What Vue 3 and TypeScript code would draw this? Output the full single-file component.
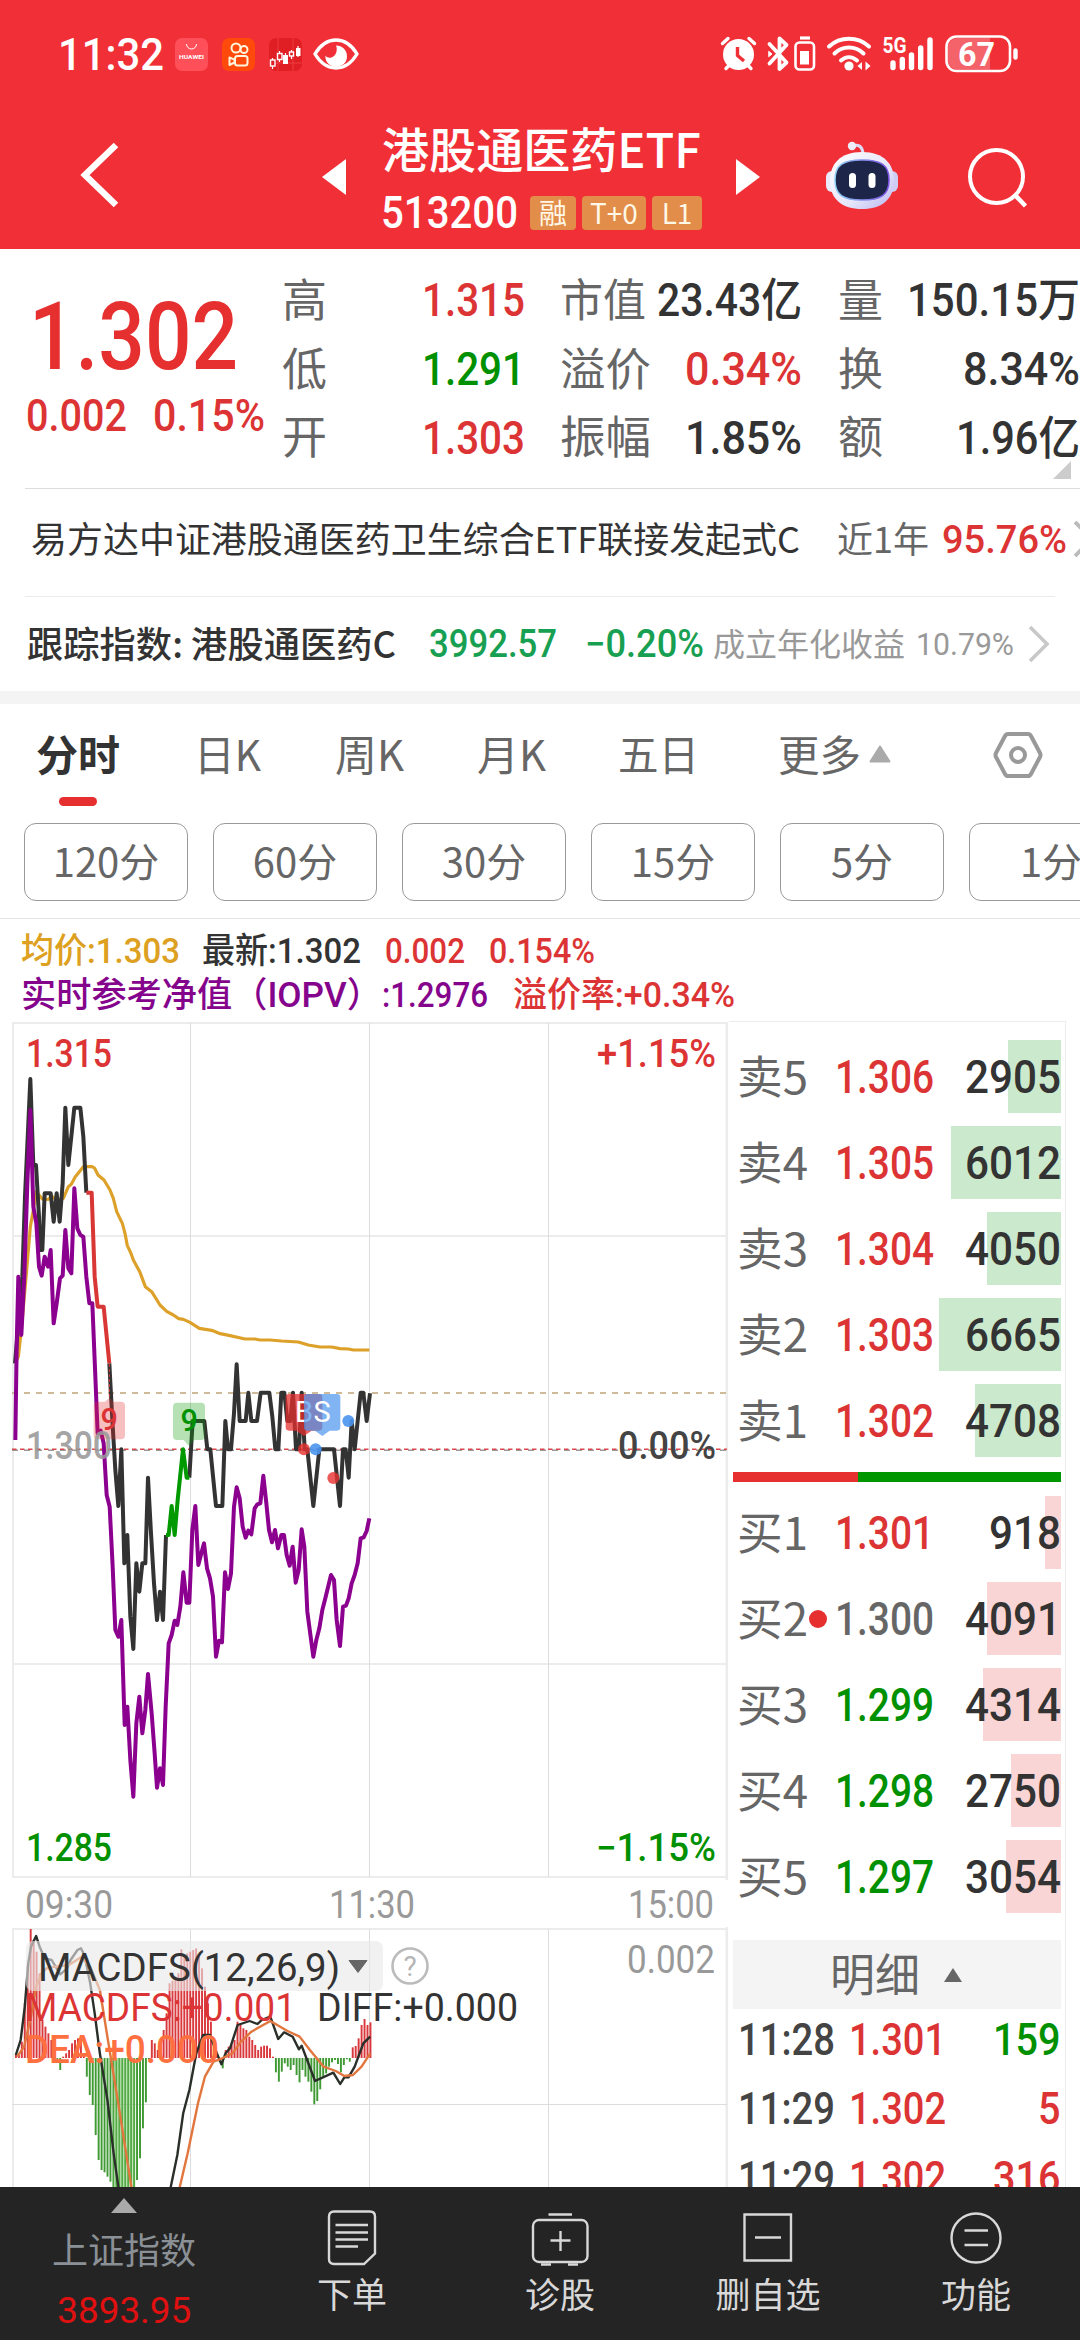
<script setup lang="ts">
import type { Directive } from 'vue'

type Tone = 'up' | 'down' | 'dark' | 'flat'

// Condenses a run of text horizontally so that it takes exactly the given width.
const vFit: Directive<HTMLElement, number> = {
  mounted(el, { value }) {
    const natural = el.getBoundingClientRect().width
    if (!natural) return
    el.style.transform = `scaleX(${value / natural})`
    el.style.marginRight = `${value - natural}px`
  },
}

interface Stat { label: string; value: string; tone: Tone; lw: number; w: number }
const stats: Stat[][] = [
  [
    { label: '高', value: '1.315', tone: 'up', lw: 45, w: 103 },
    { label: '低', value: '1.291', tone: 'down', lw: 45, w: 103 },
    { label: '开', value: '1.303', tone: 'up', lw: 45, w: 103 },
  ],
  [
    { label: '市值', value: '23.43亿', tone: 'dark', lw: 86, w: 145 },
    { label: '溢价', value: '0.34%', tone: 'up', lw: 91, w: 117 },
    { label: '振幅', value: '1.85%', tone: 'dark', lw: 91, w: 117 },
  ],
  [
    { label: '量', value: '150.15万', tone: 'dark', lw: 45, w: 173 },
    { label: '换', value: '8.34%', tone: 'dark', lw: 45, w: 117 },
    { label: '额', value: '1.96亿', tone: 'dark', lw: 45, w: 124 },
  ],
]

const tabs = [
  { text: '日K', w: 67 },
  { text: '周K', w: 69 },
  { text: '月K', w: 69 },
  { text: '五日', w: 81 },
  { text: '更多', w: 83 },
]
const periods = ['120分', '60分', '30分', '15分', '5分', '1分']

interface Level { side: string; price: string; qty: string; tone: Tone; bar: number; mine?: boolean }
const sells: Level[] = [
  { side: '卖5', price: '1.306', qty: '2905', tone: 'up', bar: 53 },
  { side: '卖4', price: '1.305', qty: '6012', tone: 'up', bar: 110 },
  { side: '卖3', price: '1.304', qty: '4050', tone: 'up', bar: 74 },
  { side: '卖2', price: '1.303', qty: '6665', tone: 'up', bar: 122 },
  { side: '卖1', price: '1.302', qty: '4708', tone: 'up', bar: 86 },
]
const buys: Level[] = [
  { side: '买1', price: '1.301', qty: '918', tone: 'up', bar: 16 },
  { side: '买2', price: '1.300', qty: '4091', tone: 'flat', bar: 74, mine: true },
  { side: '买3', price: '1.299', qty: '4314', tone: 'down', bar: 78 },
  { side: '买4', price: '1.298', qty: '2750', tone: 'down', bar: 50 },
  { side: '买5', price: '1.297', qty: '3054', tone: 'down', bar: 55 },
]
const ticks = [
  { time: '11:28', price: '1.301', qty: '159', tone: 'down' },
  { time: '11:29', price: '1.302', qty: '5', tone: 'up' },
  { time: '11:29', price: '1.302', qty: '316', tone: 'up' },
]

// Series are stored on a grid of one third of a pixel.
const avgLine =
  '46,1060 55,1040 64,960 73,860 80,780 91,650 100,600 109,545 127,567 145,568 155,558 170,570 190,565 205,530 214,523 225,502 250,470 277,470 284,475 294,495 312,510 330,540 340,565 350,605 367,640 375,670 382,707 392,728 400,750 420,787 436,830 455,845 480,885 500,904 520,915 536,926 550,928 570,937 598,955 635,961 657,970 690,977 735,987 765,987 780,990 810,990 845,993 895,996 925,1005 960,1011 995,1011 1020,1016 1045,1017 1060,1020 1108,1020'
const priceA =
  '45,1060 55,940 67,800 75,560 91,207 100,465 108,465 117,620 120,720 127,720 134,550 152,550 161,635 170,550 179,635 188,520 196,293 205,465 223,293 241,293 250,380 259,548'
const priceRed = '259,548 275,548 284,800 293,890 311,890 328,1060'
const priceB =
  '328,1060 337,1230 346,1380 355,1488 364,1318 373,1660 382,1575 391,1820 400,1917 409,1660 418,1745 427,1660 436,1660 444,1403 453,1570 462,1720 471,1830 480,1745 489,1830 498,1575'
const priceGreen = '498,1575 506,1575 515,1488 524,1575 533,1470 549,1318 560,1403 568,1403'
const priceC =
  '568,1403 578,1233 613,1233 622,1318 631,1318 648,1488 667,1488 676,1233 684,1318 693,1318 702,1210 710,1063 719,1233 737,1233 745,1148 754,1233 771,1233 782,1148 808,1148 817,1220 826,1318 835,1318 844,1148 853,1148 862,1233 871,1233 879,1148 888,1318 897,1318 905,1148 914,1318 922,1318 940,1488 958,1318 1002,1318 1020,1488 1029,1318 1037,1318 1046,1403 1055,1233 1064,1318 1082,1148 1090,1148 1100,1233 1110,1150'
const iopvLine =
  '46,1290 50,1010 55,800 64,975 73,800 82,520 91,300 100,590 109,640 117,770 125,797 134,740 144,770 152,720 161,940 170,880 180,805 188,797 196,660 205,775 214,790 223,535 232,655 241,675 250,680 259,800 268,880 277,880 284,1050 293,1270 302,1262 311,1300 320,1455 329,1490 338,1670 346,1860 355,1880 364,1830 374,2145 382,2090 391,2250 400,2360 409,2140 418,2060 427,2170 436,2100 444,1992 455,2110 464,2230 471,2333 480,2275 489,2325 497,2090 506,1900 515,1875 524,1832 532,1845 541,1790 550,1687 560,1778 568,1778 577,1560 586,1488 595,1665 604,1630 612,1600 621,1675 630,1705 639,1760 648,1940 657,1892 666,1897 675,1687 684,1737 693,1690 702,1490 710,1432 719,1465 728,1550 737,1583 745,1562 754,1573 764,1495 772,1483 781,1480 790,1397 799,1480 807,1560 816,1597 825,1560 834,1615 844,1575 852,1575 860,1635 869,1667 878,1610 887,1718 896,1680 905,1558 913,1610 922,1805 940,1940 949,1890 958,1855 967,1800 976,1765 993,1695 1002,1710 1010,1830 1020,1908 1029,1790 1038,1787 1046,1765 1055,1720 1064,1695 1073,1660 1082,1585 1091,1582 1100,1563 1108,1525'

// MACD histogram, one value a minute: end of the bar below the pane's top; the zero line is at 654.
const ZERO = 654
const macd = [
  645, 640, 605, 490, 375, 267, 300, 335, 400, 540, 560, 580, 600, 650, 660, 690, 650, 640, 630, 610, 600, 595, 600, 640,
  710, 765, 795, 885, 960, 990, 997, 1010, 1025, 1045, 1060, 1080, 1100, 1100, 1080, 1060, 1045, 1020, 955, 865, 787, 658,
  600, 610, 630, 620, 570, 520, 430, 422, 410, 400, 328, 345, 340, 335, 330, 325, 350, 385, 440, 490, 545, 600, 640, 665,
  685, 630, 620, 615, 600, 545, 550, 565, 570, 590, 600, 615, 630, 620, 617, 617, 625, 650, 697, 725, 695, 670, 680, 690,
  675, 705, 727, 690, 710, 725, 755, 793, 783, 748, 710, 700, 680, 667, 660, 672, 697, 675, 658, 665, 622, 618, 595, 555,
  537, 555, 547,
]
const bars = macd.map((v, i) => ({
  x: 46 + i * 8.58 - 2.6,
  y: Math.min(v, ZERO),
  h: Math.abs(v - ZERO),
  red: v < ZERO,
}))
const diffA =
  '46,645 60,600 72,500 82,370 90,320 105,288 115,320 130,355 150,360 175,403 195,385 205,360 225,330 235,325 245,345 262,430 275,520 290,640 312,780 330,940 345,1050'
const diffB =
  '494,1050 515,945 532,820 550,750 570,640 590,585 610,585 630,640 643,673 655,640 668,625 690,555 725,543 748,552 760,540 785,530 808,597 825,577 850,590 868,628 876,617 915,723 968,698 988,732 1000,712 1012,712 1030,680 1055,610 1075,590'
const deaA = '50,650 70,620 90,530 105,440 120,400 135,385 160,380 200,375 235,352 262,380 290,450 315,610 345,800 383,1050'
const deaB =
  '520,1050 545,940 575,790 595,710 620,665 645,655 675,640 700,605 730,575 785,543 835,573 870,590 900,630 940,680 975,693 1000,708 1025,705 1050,680 1075,640'
</script>

<template>
  <div class="app">
    <header class="top">
      <div class="status">
        <span v-fit="106" class="clock">11:32</span>
        <svg class="app-huawei" width="33" height="33" viewBox="0 0 33 33">
          <rect width="33" height="33" rx="7" fill="#ff4f58" />
          <path d="M11.500 6a5 5 0 0 0 10 0" fill="none" stroke="#fff" stroke-width="1" />
          <text x="16.500" y="21" font-size="6" font-weight="700" text-anchor="middle" fill="#fff" textLength="25" lengthAdjust="spacingAndGlyphs">HUAWEI</text>
        </svg>
        <svg class="app-icon" width="33" height="33" viewBox="0 0 33 33">
          <rect width="33" height="33" rx="7" fill="#ff4a0c" />
          <g fill="none" stroke="#fff4dc" stroke-width="2">
            <circle cx="14" cy="10" r="4.500" /><circle cx="22" cy="11.500" r="3.500" />
            <rect x="13" y="18" width="12.500" height="9.500" rx="2.500" />
            <path d="M7.500 19.500v7.500l5-2.500v-2.800z" stroke-linejoin="round" />
          </g>
        </svg>
        <svg class="app-icon" width="33" height="33" viewBox="0 0 33 33">
          <rect width="33" height="33" rx="7" fill="#e01f24" />
          <path d="M0 25h33M9 0v33M24 0v33" stroke="#f0484a" stroke-width=".8" />
          <path d="M3.500 20v11M10.500 13v11M16.500 15v11M22.500 12v9M29 8v11" stroke="#fff" stroke-width="1.200" />
          <g fill="#e01f24" stroke="#fff" stroke-width="1.400">
            <rect x="1.500" y="22" width="4.500" height="6" /><rect x="8.500" y="15.500" width="4.500" height="6" />
            <rect x="20.500" y="14" width="4" height="4" />
          </g>
          <path d="M14 17h5v9h-5zM27 10h4.500v8H27z" fill="#fff" />
        </svg>
        <svg class="eye" width="46" height="32" viewBox="0 0 46 32">
          <path d="M2 16C8 6 15 2 23 2s15 4 21 14c-6 10-13 14-21 14S8 26 2 16z" fill="none" stroke="#fff" stroke-width="3.400" />
          <path d="M23 7.500a10.800 10.800 0 1 1-10.600 10.200c1.200 1.600 3.600 2.400 6 1.800 4.600-1.200 6.600-7.500 4.600-12z" fill="#fff" />
        </svg>
        <span class="grow"></span>
        <svg width="300" height="38" viewBox="720 35 300 38">
          <g stroke="#fff" fill="none" stroke-linecap="round">
            <path d="M722.500 43.500l5.500-5M754.500 43.500l-5.500-5M726 68.500l4-4M751 68.500l-4-4" stroke-width="3.400" />
            <circle cx="738.500" cy="54.500" r="15.500" fill="#fff" stroke="none" />
            <path d="M737.500 47v8.500l6.500 5.500" stroke="#f12f37" stroke-width="3.400" stroke-linecap="butt" />
            <path d="M769.500 44l17 18.500-7 6.500V38.500l7 6.500-17 18.500" stroke-width="3.800" stroke-linejoin="round" />
            <path d="M769 51.500l3 2.500-3 2.500z" fill="#fff" stroke-width="1" />
            <rect x="795.500" y="42.500" width="18.500" height="27" rx="4" stroke-width="2.600" />
            <path d="M800 38h10" stroke-width="3.200" stroke-linecap="butt" />
            <rect x="800" y="51" width="9" height="13.500" fill="#fff" stroke="none" />
            <path d="M829 46.500c11-10.500 29-10.500 40 0M834.500 53.500c8-8 21-8 29 0M841 60.500c5-4.500 11-4.500 16 0" stroke-width="4" />
            <circle cx="849" cy="66" r="4.600" fill="#fff" stroke="none" />
            <path d="M857.500 66l4.500-4v8zM870.500 66l-5-4.500v9z" fill="#fff" stroke="none" />
            <path d="M893 63v4.500M902.300 59.500v8M911.500 55v12.500M920.700 48v19.500M930 40v27.500" stroke-width="5.400" />
            <rect x="946.500" y="36.500" width="63.500" height="34.500" rx="10" stroke-width="2.600" />
            <path d="M957 38h33v31.500h-33a9 9 0 0 1-9-9V47a9 9 0 0 1 9-9z" fill="#fff" fill-opacity=".25" stroke="none" />
            <path d="M1015.500 50.500v7" stroke-width="4.400" />
          </g>
          <text x="882.500" y="53" font-size="22" font-weight="700" fill="#fff" textLength="24" lengthAdjust="spacingAndGlyphs">5G</text>
          <text x="958" y="66" font-size="33" font-weight="700" fill="#fff" textLength="37" lengthAdjust="spacingAndGlyphs">67</text>
        </svg>
      </div>
      <div class="nav">
        <svg class="back" width="40" height="68" viewBox="0 0 40 68">
          <path d="M36 4L5 34l31 30" fill="none" stroke="#fff" stroke-width="6.500" />
        </svg>
        <svg class="prev" width="24" height="36" viewBox="0 0 24 36"><path d="M24 0v36L0 18z" fill="#fff" /></svg>
        <div class="name">
          <div class="title"><span v-fit="319" class="c">港股通医药ETF</span></div>
          <div class="code">
            <span v-fit="137" class="num">513200</span>
            <i class="tag t1">融</i><i class="tag t2">T+0</i><i class="tag t3">L1</i>
          </div>
        </div>
        <svg class="next" width="24" height="36" viewBox="0 0 24 36"><path d="M0 0v36l24-18z" fill="#fff" /></svg>
        <svg class="robot" width="72" height="68" viewBox="0 0 72 68">
          <defs>
            <linearGradient id="shell" x1="0" y1="0" x2="1" y2="1">
              <stop offset="0" stop-color="#fff" /><stop offset=".6" stop-color="#e6e6fb" /><stop offset="1" stop-color="#b9b6f0" />
            </linearGradient>
            <linearGradient id="rim" x1="0" y1="0" x2="1" y2="0">
              <stop offset="0" stop-color="#8fd0f5" /><stop offset="1" stop-color="#7b4fe0" />
            </linearGradient>
          </defs>
          <path d="M27 5c5-2 9 0 10 7" fill="none" stroke="#dcdcf6" stroke-width="3" />
          <circle cx="26" cy="5" r="4.200" fill="#eeeefb" />
          <rect x="0" y="30" width="12" height="21" rx="6" fill="#e9eafc" />
          <rect x="60" y="30" width="12" height="21" rx="6" fill="#cfcdf3" />
          <path d="M36 11c22 0 32 12 32 29 0 18-12 28-32 28S4 58 4 40c0-17 10-29 32-29z" fill="url(#shell)" />
          <path d="M36 19c19 0 27 5 27 20s-8 20-27 20S9 54 9 39s8-20 27-20z" fill="#1d2549" stroke="url(#rim)" stroke-width="1.500" />
          <rect x="23" y="32" width="7" height="15" rx="3.500" fill="#fff" /><rect x="42.500" y="32" width="7" height="15" rx="3.500" fill="#fff" />
        </svg>
        <svg class="search" width="62" height="62" viewBox="0 0 62 62">
          <circle cx="30.500" cy="30.500" r="26.500" fill="none" stroke="#fff" stroke-width="4" />
          <path d="M48 48l11.500 12" stroke="#fff" stroke-width="4.500" />
        </svg>
      </div>
    </header>

    <section class="quote">
      <div class="last">
        <div class="big up"><span v-fit="209">1.302</span></div>
        <div class="chg up"><span v-fit="101">0.002</span><span v-fit="112" class="pct">0.15%</span></div>
      </div>
      <div v-for="(col, i) in stats" :key="i" class="col" :class="'col' + i">
        <div v-for="s in col" :key="s.label" class="stat">
          <span v-fit="s.lw" class="c lab">{{ s.label }}</span>
          <span class="val"><span v-fit="s.w" :class="s.tone">{{ s.value }}</span></span>
        </div>
      </div>
      <i class="corner"></i>
    </section>

    <section class="line fund">
      <span v-fit="769" class="c dark">易方达中证港股通医药卫生综合ETF联接发起式C</span>
      <span v-fit="92" class="c near">近1年</span>
      <span v-fit="125" class="num fund-pct up">95.76%</span>
      <svg class="more" width="8" height="36" viewBox="0 0 8 36"><path d="M1 1l17 17L1 35" fill="none" stroke="#bbb" stroke-width="4" /></svg>
    </section>
    <section class="line index">
      <span v-fit="369" class="c dark med">跟踪指数: 港股通医药C</span>
      <span v-fit="128" class="num idx g1">3992.57</span>
      <span v-fit="119" class="num idx g2">−0.20%</span>
      <span v-fit="192" class="c ann">成立年化收益</span>
      <span v-fit="98" class="num annv">10.79%</span>
      <svg class="chev" width="22" height="38" viewBox="0 0 22 38"><path d="M2 2l17 17L2 36" fill="none" stroke="#c8c8c8" stroke-width="3.600" /></svg>
    </section>

    <nav class="tabs">
      <span class="tab on"><span v-fit="84" class="c">分时</span></span>
      <span v-for="(t, i) in tabs" :key="t.text" class="tab" :class="'tab' + i"><span v-fit="t.w" class="c">{{ t.text }}</span></span>
      <svg class="tri" width="22" height="18" viewBox="0 0 22 18"><path d="M11 1.500L20.500 16.500H1.500z" fill="#aaa" stroke="#aaa" stroke-width="2" stroke-linejoin="round" /></svg>
      <svg class="gear" width="50" height="48" viewBox="0 0 50 48">
        <path d="M15 3h20q2 0 3 2l9 17q1 2 0 4l-9 17q-1 2-3 2H15q-2 0-3-2L3 26q-1-2 0-4l9-17q1-2 3-2z" fill="none" stroke="#999" stroke-width="4" />
        <circle cx="25" cy="24" r="7" fill="none" stroke="#999" stroke-width="4" />
      </svg>
    </nav>
    <div class="pills"><span v-for="p in periods" :key="p" class="pill"><span class="c">{{ p }}</span></span></div>

    <div class="legend">
      <div class="lg">
        <span v-fit="159" class="gold">均价:1.303</span><span v-fit="159" class="dark l2">最新:1.302</span>
        <span v-fit="80" class="up l3">0.002</span><span v-fit="106" class="up l4">0.154%</span>
      </div>
      <div class="lg">
        <span v-fit="361" class="purple">实时参考净值（IOPV）</span><span v-fit="106" class="purple">:1.2976</span><span v-fit="222" class="up l5">溢价率:+0.34%</span>
      </div>
    </div>

    <main class="body">
      <div class="charts">
        <svg width="729" height="862" viewBox="0 1018 729 862">
          <g fill="none" stroke="#ececec" stroke-width="2">
            <path d="M13 1022.500V1877M12 1023H728M12 1236H728M12 1664H728M12 1877H728" />
            <path d="M726.800 1022V1880" stroke-width="2.600" />
          </g>
          <path d="M190.500 1023V1877M369.500 1023V1877M548.500 1023V1877" stroke="#ddd" stroke-width="1" />
          <path d="M12 1393H727" stroke="#c0a575" stroke-width="1.600" stroke-dasharray="6 6" />
          <path d="M12 1450.300H727" stroke="#999" stroke-width="1.400" stroke-dasharray="6 6" />
          <path d="M12 1449.300H727" stroke="#d94848" stroke-width="1.600" stroke-dasharray="4.500 3.500" />
          <g font-size="38" font-weight="500" text-anchor="start">
            <text x="26" y="1067" class="f-up" textLength="86" lengthAdjust="spacingAndGlyphs">1.315</text>
            <text x="26" y="1861" class="f-down" textLength="86" lengthAdjust="spacingAndGlyphs">1.285</text>
            <text x="597" y="1067" class="f-up" textLength="119" lengthAdjust="spacingAndGlyphs">+1.15%</text>
            <text x="618" y="1459" fill="#444" textLength="98" lengthAdjust="spacingAndGlyphs">0.00%</text>
            <text x="596" y="1861" class="f-down" textLength="120" lengthAdjust="spacingAndGlyphs">−1.15%</text>
          </g>
          <g transform="translate(0 1010) scale(.33333)" fill="none" stroke-width="12" stroke-linejoin="round">
            <polyline :points="avgLine" stroke="#dda12a" stroke-width="9.500" />
            <g stroke="#333">
              <polyline :points="priceA" /><polyline :points="priceB" /><polyline :points="priceC" />
            </g>
            <polyline :points="priceRed" stroke="#d93636" />
            <polyline :points="priceGreen" stroke="#009900" />
            <polyline :points="iopvLine" stroke="#8b008f" />
            <path d="M328 1062V1165" stroke="#d93636" stroke-width="3" stroke-dasharray="9 6" />
            <g stroke="none">
              <path d="M293 1175h22l13-12 13 12h22q12 0 12 12v89q0 12-12 12h-70q-12 0-12-12v-89q0-12 12-12z" fill="#e62f2f" fill-opacity=".3" />
              <path d="M531 1178h72q12 0 12 12v88q0 12-12 12h-20l-16 18-16-18h-20q-12 0-12-12v-88q0-12 12-12z" fill="#0a9a0a" fill-opacity=".3" />
              <path d="M867 1152h90q10 0 10 10v90q0 10-10 10h-22l-23 16-23-16h-22q-10 0-10-10v-90q0-10 10-10z" fill="#e62f2f" fill-opacity=".75" />
              <text x="912" y="1237" font-size="87" text-anchor="middle" fill="#fff">B</text>
              <path d="M922 1152h89q10 0 10 10v90q0 10-10 10h-22l-22 16-22-16h-23q-10 0-10-10v-90q0-10 10-10z" fill="#4a94ee" fill-opacity=".7" />
              <text x="966" y="1237" font-size="87" text-anchor="middle" fill="#fff">S</text>
              <text x="328" y="1260" font-size="92" font-weight="500" text-anchor="middle" class="f-up">9</text>
              <text x="568" y="1262" font-size="92" font-weight="500" text-anchor="middle" class="f-down">9</text>
              <circle cx="912" cy="1318" r="18" fill="#e62f2f" fill-opacity=".8" />
              <circle cx="947" cy="1318" r="18" fill="#4a94ee" fill-opacity=".9" />
              <circle cx="1045" cy="1233" r="18" fill="#4a94ee" fill-opacity=".9" />
              <circle cx="1000" cy="1404" r="18" fill="#e62f2f" fill-opacity=".8" />
            </g>
          </g>
          <text x="26" y="1459" font-size="38" font-weight="500" fill="#999" fill-opacity=".9" textLength="86" lengthAdjust="spacingAndGlyphs">1.300</text>
        </svg>
        <div class="times">
          <span v-fit="88">09:30</span><span v-fit="86" class="noon">11:30</span><span v-fit="86" class="close">15:00</span>
        </div>
        <svg width="729" height="260" viewBox="0 1927 729 260">
          <path d="M12 1929H728M13 1928V2190" stroke="#ececec" stroke-width="2" />
          <path d="M726.800 1927V2190" stroke="#ececec" stroke-width="2.600" />
          <path d="M12 2104.500H727M190.500 1929V2190M369.500 1929V2190M548.500 1929V2190" stroke="#ddd" stroke-width="1" />
          <g transform="translate(0 1840) scale(.34435 .33333)" fill="none" stroke-width="7" stroke-linejoin="round">
            <g stroke="none">
              <rect v-for="(b, i) in bars" :key="i" :x="b.x" :y="b.y" width="5.600" :height="b.h" :fill="b.red ? '#d9383c' : '#3f9a34'" />
              <path d="M329 654h64v400h-64z" fill="#7ccb66" fill-opacity=".35" />
            </g>
            <polyline :points="diffA" stroke="#2a2f2a" /><polyline :points="diffB" stroke="#2a2f2a" />
            <polyline :points="deaA" stroke="#e2763f" /><polyline :points="deaB" stroke="#e2763f" />
          </g>
          <rect x="26" y="1941" width="357" height="50" rx="7" fill="#e9e9e9" fill-opacity=".62" />
          <text x="38" y="1981" font-size="38" fill="#333" class="w" textLength="302" lengthAdjust="spacingAndGlyphs">MACDFS(12,26,9)</text>
          <path d="M349 1960.500h18l-9 12z" fill="#666" stroke="#666" stroke-linejoin="round" />
          <circle cx="410" cy="1966" r="17.500" fill="none" stroke="#bbb" stroke-width="2.600" />
          <text x="410" y="1976" font-size="28" text-anchor="middle" fill="#b5b5b5" class="w">?</text>
          <g font-size="38">
            <text x="25" y="2021" class="f-up" textLength="271" lengthAdjust="spacingAndGlyphs">MACDFS:+0.001</text>
            <text x="317" y="2021" fill="#333" textLength="201" lengthAdjust="spacingAndGlyphs">DIFF:+0.000</text>
            <text x="25" y="2063" fill="#ff7040" font-weight="500" textLength="194" lengthAdjust="spacingAndGlyphs">DEA:+0.000</text>
            <text x="627" y="1973" fill="#999" textLength="88" lengthAdjust="spacingAndGlyphs">0.002</text>
          </g>
        </svg>
      </div>

      <aside class="book">
        <div v-for="l in sells" :key="l.side" class="level sell">
          <i class="depth" :style="{ width: l.bar + 'px' }"></i>
          <span v-fit="71" class="c side">{{ l.side }}</span>
          <span v-fit="99" class="price" :class="l.tone">{{ l.price }}</span>
          <span class="qty"><span v-fit="96">{{ l.qty }}</span></span>
        </div>
        <div class="ratio"><i></i></div>
        <div v-for="l in buys" :key="l.side" class="level buy">
          <i class="depth" :style="{ width: l.bar + 'px' }"></i>
          <span v-fit="71" class="c side">{{ l.side }}</span>
          <i v-if="l.mine" class="dot"></i>
          <span v-fit="99" class="price" :class="l.tone">{{ l.price }}</span>
          <span class="qty"><span v-fit="l.qty.length * 24">{{ l.qty }}</span></span>
        </div>
        <div class="detail"><span class="c">明细</span><svg width="18" height="14" viewBox="0 0 18 14"><path d="M9 0l9 14H0z" fill="#666" /></svg></div>
        <div v-for="(t, i) in ticks" :key="i" class="tick">
          <span v-fit="97">{{ t.time }}</span>
          <span v-fit="97" class="tp up">{{ t.price }}</span>
          <span class="tq" :class="t.tone"><span v-fit="t.qty.length * 22.5">{{ t.qty }}</span></span>
        </div>
      </aside>
    </main>

    <footer class="dock">
      <div class="sse">
        <svg width="26" height="15" viewBox="0 0 26 15"><path d="M13 0l13 15H0z" fill="#aaa" /></svg>
        <span class="c sse-name">上证指数</span>
        <span v-fit="134" class="sse-val">3893.95</span>
      </div>
      <div class="item">
        <svg width="60" height="60" viewBox="0 0 60 60" class="ic">
          <path d="M12 4.500h36q5 0 5 5v37L42 57H12q-5 0-5-5V9.500q0-5 5-5z" /><path d="M13.500 18H46M13.500 25.500H46M13.500 32.500H46M13.500 39.500H36" />
        </svg>
        <span class="c">下单</span>
      </div>
      <div class="item">
        <svg width="60" height="60" viewBox="0 0 60 60" class="ic">
          <rect x="3" y="13" width="54.500" height="42" rx="6" /><path d="M18.500 7.500H42M11 57.500h10M38 57.500h10M20.500 33.500h20M30.500 24v20" />
        </svg>
        <span class="c">诊股</span>
      </div>
      <div class="item">
        <svg width="60" height="60" viewBox="0 0 60 60" class="ic"><path d="M6.500 7.500h46.500v46H6.500zM17 30.500h26" /></svg>
        <span class="c">删自选</span>
      </div>
      <div class="item">
        <svg width="60" height="60" viewBox="0 0 60 60" class="ic"><circle cx="30" cy="31" r="24.500" /><path d="M18.500 23.500H42M18.500 38H42" /></svg>
        <span class="c">功能</span>
      </div>
    </footer>
  </div>
</template>

<style>
body {
  margin: 0;
  background: #fff;
}
</style>

<style scoped>
.app {
  width: 1080px;
  height: 2340px;
  overflow: hidden;
  background: #fff;
  font-family: Roboto, 'Noto Sans CJK SC', sans-serif;
  color: #333;
  display: flex;
  flex-direction: column;
}
.app > * {
  flex: none;
}
span {
  white-space: nowrap;
}
svg {
  display: block;
  flex: none;
}
span,
i {
  flex: none;
  transform-origin: left center;
}
.c {
  font-family: 'Noto Sans CJK SC', sans-serif;
  padding-bottom: 0.11em;
  display: inline-block;
}
.up { color: #dc3434; }
.down { color: #009000; }
.dark { color: #333; }
.flat { color: #666; }
.gold { color: #dda020; }
.purple { color: #85048c; }
.f-up { fill: #dc3434; }
.f-down { fill: #009000; }
.w { font-weight: 400; }
.grow { flex: 1; }

.top {
  height: 249px;
  background: #f12f37;
  color: #fff;
}
.status {
  height: 108px;
  box-sizing: border-box;
  padding: 0 60px 0 58px;
  display: flex;
  align-items: center;
}
.clock { font-size: 45px; font-weight: 500; }
.app-huawei { margin-left: 11px; }
.app-icon { margin-left: 14px; }
.eye { margin-left: 11px; }
.nav {
  height: 133px;
  display: flex;
  align-items: center;
}
.back { margin-left: 80px; }
.prev { margin-left: 202px; margin-top: 4px; }
.name { margin-left: 36px; width: 354px; }
.title {
  height: 60px;
  line-height: 60px;
  font-size: 48px;
  font-weight: 500;
  display: flex;
  align-items: center;
}
.code {
  height: 34px;
  margin-top: 16px;
  display: flex;
  align-items: center;
  font-size: 45px;
  font-weight: 500;
}
.code .num { margin-left: -1px; }
.tag {
  height: 34px;
  border-radius: 4px;
  background: #e28d4a;
  color: #fff8e6;
  font: 400 28px/32px 'Noto Sans CJK SC', sans-serif;
  text-align: center;
}
.t1 { width: 46px; margin-left: 12px; }
.t2 { width: 64px; margin-left: 6px; }
.t3 { width: 50px; margin-left: 6px; }
.next { margin-top: 4px; }
.robot { margin-left: 66px; }
.search { margin-left: 68px; margin-top: 4px; }

.quote {
  height: 239px;
  display: flex;
  position: relative;
  border-bottom: 1px solid #fff;
}
.quote::after {
  content: '';
  position: absolute;
  left: 25px;
  right: 0;
  bottom: -1px;
  height: 1px;
  background: #ddd;
}
.last { width: 282px; }
.big {
  height: 96px;
  line-height: 96px;
  margin: 40px 0 0 29px;
  font-size: 95px;
  font-weight: 500;
  color: #e62f2f;
  display: flex;
}
.chg {
  display: flex;
  margin: 7px 0 0 26px;
  height: 48px;
  line-height: 48px;
  font-size: 44px;
  font-weight: 500;
}
.pct { margin-left: 26px; }
.col { padding-top: 17px; }
.stat {
  height: 68.700px;
  display: flex;
  align-items: center;
}
.lab { font-size: 45px; line-height: 60px; color: #666; }
.val {
  flex: 1;
  display: flex;
  justify-content: flex-end;
  font-size: 46px;
  line-height: 54px;
  font-weight: 500;
}
.col0 { width: 243px; }
.col1 { width: 242px; margin-left: 35px; }
.col2 { width: 242px; margin-left: 36px; }
.corner {
  position: absolute;
  right: 9px;
  bottom: 9px;
  border-left: 18px solid transparent;
  border-bottom: 18px solid #ccc;
}

.line {
  display: flex;
  align-items: center;
  position: relative;
  font-size: 36px;
}
.fund { height: 108px; padding: 0 0 0 31px; }
.fund::before { content: ''; position: absolute; left: 25px; right: 25px; bottom: 0; height: 1px; background: #ebebeb; }
.fund > * { margin-top: -9px; }
.near { margin-left: 37px; color: #666; }
.fund-pct { margin-left: 13px; font-size: 39px; font-weight: 500; padding-top: 3px; }
.more { margin-left: 7px; }
.index { height: 94px; padding-left: 27px; border-bottom: 13px solid #f4f4f4; }
.med { font-weight: 500; }
.idx { font-size: 38px; font-weight: 500; color: #18a052; }
.g1 { margin-left: 33px; }
.g2 { margin-left: 28px; }
.ann { margin-left: 9px; font-size: 32px; color: #999; }
.annv { margin-left: 11px; font-size: 32px; color: #999; }
.chev { margin-left: 14px; }

.tabs {
  height: 119px;
  display: flex;
  align-items: flex-start;
  font-size: 42px;
  color: #666;
}
.tab { height: 102px; display: flex; align-items: center; }
.on { margin-left: 36px; color: #333; font-weight: 700; position: relative; }
.on::after {
  content: '';
  position: absolute;
  left: 23px;
  bottom: 0;
  width: 38px;
  height: 9px;
  border-radius: 5px;
  background: #e62f2f;
}
.tab0 { margin-left: 74px; }
.tab1 { margin-left: 74px; }
.tab2 { margin-left: 73px; }
.tab3 { margin-left: 72px; }
.tab4 { margin-left: 79px; }
.tri { margin: 41px 0 0 8px; }
.gear { margin: 27px 0 0 102px; }
.pills {
  height: 95px;
  padding-left: 24px;
  display: flex;
  gap: 25px;
  overflow: hidden;
  border-bottom: 1px solid #e5e5e5;
}
.pill {
  width: 164px;
  height: 78px;
  box-sizing: border-box;
  border: 1.500px solid #999;
  border-radius: 12px;
  display: flex;
  justify-content: center;
  align-items: center;
  font-size: 40px;
  color: #666;
}
.legend {
  height: 99px;
  box-sizing: border-box;
  padding: 11px 0 0 21px;
  font-size: 35px;
}
.lg {
  height: 44px;
  line-height: 44px;
  display: flex;
  font-weight: 500;
}
.l2 { margin-left: 22px; }
.l3 { margin-left: 24px; }
.l4 { margin-left: 24px; }
.l5 { margin-left: 25px; }

.body {
  height: 1169px;
  display: flex;
  overflow: hidden;
}
.charts { width: 729px; }
.times {
  height: 47px;
  box-sizing: border-box;
  padding-left: 25px;
  display: flex;
  align-items: center;
  font-size: 38px;
  color: #999;
  padding-top: 3px;
}
.noon { margin-left: 216px; }
.close { margin-left: 213px; }
.book {
  width: 337px;
  height: 1169px;
  margin-top: 3px;
  box-sizing: border-box;
  padding: 18px 4px 0 4px;
  border-top: 1px solid #ececec;
  border-right: 1px solid #ececec;
}
.level {
  height: 86px;
  display: flex;
  align-items: flex-start;
  line-height: 74px;
  position: relative;
  font-size: 46px;
  font-weight: 500;
}
.depth {
  position: absolute;
  right: 0;
  top: 0;
  height: 73px;
}
.sell .depth { background: #cbe9cc; }
.buy .depth { background: #f9d5d5; }
.side {
  margin-left: 4px;
  font-size: 45px;
  font-weight: 400;
  line-height: 69px;
  color: #666;
}
.price { margin-left: 27px; }
.dot {
  position: absolute;
  left: 76px;
  top: 28px;
  width: 18px;
  height: 18px;
  border-radius: 50%;
  background: #e62f2f;
}
.qty {
  flex: 1;
  display: flex;
  justify-content: flex-end;
  position: relative;
}
.ratio {
  height: 10px;
  margin: 2px 0 14px;
  background: #009600;
}
.ratio i {
  display: block;
  width: 125px;
  height: 10px;
  background: #e62f2f;
}
.detail {
  height: 69px;
  margin-top: 14px;
  background: #f4f4f4;
  display: flex;
  align-items: center;
  padding-left: 97px;
  font-size: 45px;
  color: #666;
}
.detail svg { margin-left: 24px; }
.tick {
  height: 69px;
  line-height: 63px;
  padding-left: 5px;
  display: flex;
  font-size: 44px;
  font-weight: 500;
  color: #444;
}
.tp { margin-left: 14px; }
.tq { flex: 1; display: flex; justify-content: flex-end; padding-right: 1px; }

.dock {
  height: 153px;
  background: #242424;
  color: #d8d8d8;
  display: flex;
  font-size: 35px;
}
.sse { width: 248px; display: flex; flex-direction: column; align-items: center; }
.sse svg { margin-top: 11px; }
.sse-name { font-size: 36px; line-height: 40px; margin-top: 15px; color: #8a9095; }
.sse-val { font-size: 37px; line-height: 44px; margin-top: 17px; color: #e01010; transform-origin: center; }
.item { width: 208px; display: flex; flex-direction: column; align-items: center; line-height: 44px; }
.item svg { margin: 20px 0 4px; }
.ic { fill: none; stroke: #d8d8d8; stroke-width: 2.400; }
</style>
